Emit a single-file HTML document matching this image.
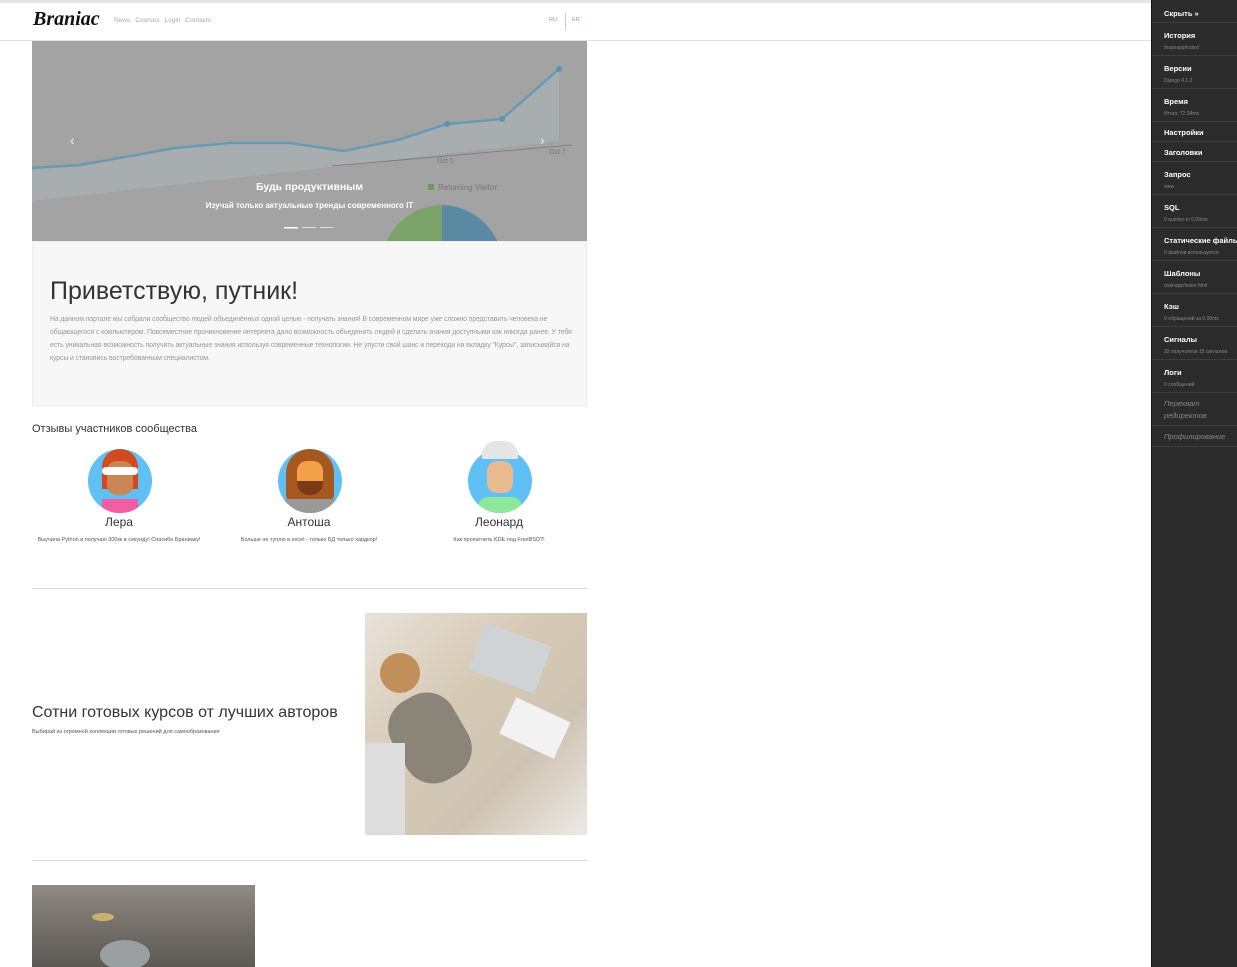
<!DOCTYPE html>
<html><head><meta charset="utf-8">
<style>
*{box-sizing:border-box;margin:0;padding:0}
body{width:1237px;height:967px;overflow:hidden;background:#fff;font-family:"Liberation Sans","DejaVu Sans",sans-serif;position:relative}
.top{position:absolute;left:0;top:0;width:1151px;height:3px;background:#e5e5e5}
.nav{position:absolute;left:0;top:3px;width:1151px;height:38px;border-bottom:1px solid #e0e0e0;background:#fff}
.logo{position:absolute;left:33px;top:5px;font-family:"Liberation Serif",serif;font-style:italic;font-weight:bold;font-size:20px;color:#111}
.links{position:absolute;left:114px;top:14px;font-size:6.5px;color:#aaa}
.links span{margin-right:5px}
.lang{position:absolute;top:14px;font-size:5.5px;color:#7a9bc0}
.sep{position:absolute;left:565px;top:10px;width:1px;height:18px;background:#ccc}
.hero{position:absolute;left:32px;top:41px;width:555px;height:200px;background:#a3a3a3;overflow:hidden}
.cap1{position:absolute;left:0;width:555px;text-align:center;color:#fff;font-weight:bold}
.jumbo{position:absolute;left:32px;top:241px;width:555px;height:165px;background:#f7f7f7;border:1px solid #eee}
.jumbo h1{position:absolute;left:17px;top:35px;font-weight:normal;font-size:25px;color:#333}
.jumbo p{position:absolute;left:17px;top:72px;width:525px;font-size:6.9px;line-height:12.9px;color:#999;letter-spacing:-0.1px}
.rev{position:absolute;left:32px;top:423px;font-size:11px;color:#333}
.av{position:absolute;width:64px;height:64px;border-radius:50%;background:#5ec0f5;overflow:hidden}
.name{position:absolute;width:180px;text-align:center;font-size:12px;color:#333}
.q{position:absolute;width:170px;text-align:center;font-size:5.5px;line-height:11px;color:#555}
hr.l{position:absolute;left:32px;width:555px;border:0;border-top:1px solid #ddd}
.side{position:absolute;left:1151px;top:0;width:86px;height:967px;background:#2b2b2b;border-left:1px solid #111}
.it{border-bottom:1px solid #3d3d3d;padding:5px 0 0 12px;color:#fff;font-size:7.5px;font-weight:bold;white-space:nowrap;overflow:hidden;height:20px}
.it.t{height:33px;padding-top:8px}
.it small{display:block;font-weight:normal;font-size:5px;color:#888;margin-top:5px}
.it.d{color:#888;font-style:italic;font-weight:normal}
</style></head><body>
<div class="top"></div>
<div class="nav">
<div class="logo">Braniac</div>
<div class="links"><span>News</span><span>Courses</span><span>Login</span><span>Contacts</span></div>
<div class="lang" style="left:549px">RU</div><div class="sep"></div><div class="lang" style="left:572px">EN</div>
</div>
<div class="hero">
<svg width="555" height="200" style="position:absolute;left:0;top:0">
<path d="M0 127 L48 124 L93 116 L143 107 L198 102 L258 102 L312 110 L366 99 L415 83 L470 78 L527 28 L527 100 L0 160Z" fill="#a9b0b3" opacity=".7"/>
<polyline points="0,127 48,124 93,116 143,107 198,102 258,102 312,110 366,99 415,83 470,78 527,28" fill="none" stroke="#6a9ab3" stroke-width="2.5"/>
<circle cx="415" cy="83" r="3" fill="#5e93ad"/><circle cx="470" cy="78" r="3" fill="#5e93ad"/><circle cx="527" cy="28" r="3" fill="#5e93ad"/>
<line x1="300" y1="125" x2="540" y2="104" stroke="#777" stroke-width="0.8"/>
<text x="405" y="122" font-size="7" fill="#777">Oct 5</text><text x="517" y="113" font-size="7" fill="#777">Oct 7</text>
<path d="M350 215 A62 62 0 0 1 410 164 L410 215Z" fill="#7aa36a"/>
<path d="M410 164 A62 62 0 0 1 470 215 L410 215Z" fill="#5b8aa5"/>
<rect x="396" y="143" width="6" height="6" fill="#6a9a5a"/><text x="406" y="149" font-size="8" fill="#777">Returning Visitor</text>
<text x="38" y="104" font-size="14" fill="#ddd" font-weight="bold">‹</text><text x="508" y="104" font-size="14" fill="#ddd" font-weight="bold">›</text>
<rect x="252" y="186" width="14" height="1.5" fill="#fff"/><rect x="270" y="186" width="14" height="1" fill="#ddd"/><rect x="288" y="186" width="14" height="1" fill="#ddd"/>
</svg>
<div class="cap1" style="top:140px;font-size:10.5px">Будь продуктивным</div>
<div class="cap1" style="top:160px;font-size:8px">Изучай только актуальные тренды современного IT</div>
</div>
<div class="jumbo"><h1>Приветствую, путник!</h1>
<p>На данном портале мы собрали сообщество людей объединённых одной целью - получать знания! В современном мире уже сложно представить человека не общающегося с компьютером. Повсеместное проникновение интернета дало возможность объеденить людей и сделать знания доступными как никогда ранее. У тебя есть уникальная возможность получить актуальные знания используя современные технологии. Не упусти свой шанс и переходи на вкладку "Курсы", записывайся на курсы и становись востребованным специалистом.</p></div>
<div class="rev">Отзывы участников сообщества</div>

<div class="av" style="left:88px;top:449px"><div style="position:absolute;left:14px;top:0;width:36px;height:40px;background:#d4491e;border-radius:18px 18px 0 0"></div><div style="position:absolute;left:19px;top:12px;width:26px;height:34px;background:#c98756;border-radius:10px"></div><div style="position:absolute;left:14px;top:18px;width:36px;height:8px;background:#fff;border-radius:4px"></div><div style="position:absolute;left:14px;top:50px;width:36px;height:20px;background:#f25da4"></div></div>
<div class="av" style="left:278px;top:449px"><div style="position:absolute;left:8px;top:0;width:48px;height:52px;background:#a6581f;border-radius:24px 24px 6px 6px"></div><div style="position:absolute;left:19px;top:12px;width:26px;height:32px;background:#f2a04a;border-radius:10px"></div><div style="position:absolute;left:19px;top:32px;width:26px;height:14px;background:#7a3a18;border-radius:0 0 12px 12px"></div><div style="position:absolute;left:6px;top:50px;width:52px;height:20px;background:#999"></div></div>
<div class="av" style="left:468px;top:449px;overflow:visible;background:transparent"><div style="position:absolute;left:0;top:0;width:64px;height:64px;border-radius:50%;background:#5ec0f5;overflow:hidden"><div style="position:absolute;left:19px;top:12px;width:26px;height:32px;background:#e9b98f;border-radius:10px"></div><div style="position:absolute;left:10px;top:48px;width:44px;height:20px;background:#8ee89c;border-radius:10px 10px 0 0"></div></div><div style="position:absolute;left:14px;top:-8px;width:36px;height:18px;background:#e5e5e5;border-radius:14px 14px 0 0"></div></div>

<div class="name" style="left:29px;top:515px">Лера</div>
<div class="name" style="left:219px;top:515px">Антоша</div>
<div class="name" style="left:409px;top:515px">Леонард</div>
<div class="q" style="left:34px;top:535px">Выучила Python и получаю 300кк в секунду! Спасибо Браниаку!</div>
<div class="q" style="left:224px;top:535px">Больше не туплю в excel - только БД только хардкор!</div>
<div class="q" style="left:414px;top:535px">Как пропатчить KDE под FreeBSD?!</div>

<hr class="l" style="top:588px">
<div style="position:absolute;left:32px;top:704px;font-size:16px;color:#333">Сотни готовых курсов от лучших авторов</div>
<div style="position:absolute;left:32px;top:729px;font-size:5.5px;color:#555">Выбирай из огромной коллекции готовых решений для самообразования</div>
<div style="position:absolute;left:365px;top:613px;width:222px;height:222px;background:linear-gradient(135deg,#e8e2d8,#d6c9b5 40%,#cfc4b4 70%,#eceae6);overflow:hidden">
<div style="position:absolute;left:110px;top:20px;width:70px;height:50px;background:#cfd3d6;transform:rotate(20deg)"></div>
<div style="position:absolute;left:140px;top:95px;width:60px;height:40px;background:#f2f2f2;transform:rotate(25deg)"></div>
<div style="position:absolute;left:30px;top:80px;width:70px;height:90px;background:#8b8478;border-radius:30px;transform:rotate(-30deg)"></div>
<div style="position:absolute;left:15px;top:40px;width:40px;height:40px;background:#c09058;border-radius:50%"></div>
<div style="position:absolute;left:0;top:130px;width:40px;height:92px;background:#ddd"></div>
</div>
<hr class="l" style="top:860px">
<div style="position:absolute;left:32px;top:885px;width:223px;height:82px;background:linear-gradient(180deg,#8f8a84,#6f6a64 60%,#5d5955);overflow:hidden">
<div style="position:absolute;left:60px;top:28px;width:22px;height:8px;background:#c8b070;border-radius:50%"></div>
<div style="position:absolute;left:68px;top:55px;width:50px;height:30px;background:#9aa0a0;border-radius:50%"></div>
</div>

<div class="side">
<div class="it" style="height:23px;padding-top:9px">Скрыть »</div>
<div class="it t">История<small>/mainapp/index/</small></div>
<div class="it t">Версии<small>Django 4.1.2</small></div>
<div class="it t">Время<small>Итого: 72.54ms</small></div>
<div class="it" style="padding-top:6px">Настройки</div>
<div class="it" style="padding-top:6px">Заголовки</div>
<div class="it t">Запрос<small>view</small></div>
<div class="it t">SQL<small>0 queries in 0.00ms</small></div>
<div class="it t">Статические файлы<small>9 файлов используется</small></div>
<div class="it t">Шаблоны<small>mainapp/index.html</small></div>
<div class="it t">Кэш<small>0 обращений за 0.00ms</small></div>
<div class="it t">Сигналы<small>32 получатели 15 сигналов</small></div>
<div class="it t">Логи<small>0 сообщений</small></div>
<div class="it d" style="height:33px;padding-top:5px;line-height:12px">Перехват<br>редиректов</div>
<div class="it d" style="height:21px;padding-top:6px">Профилирование</div>
</div>
</body></html>
